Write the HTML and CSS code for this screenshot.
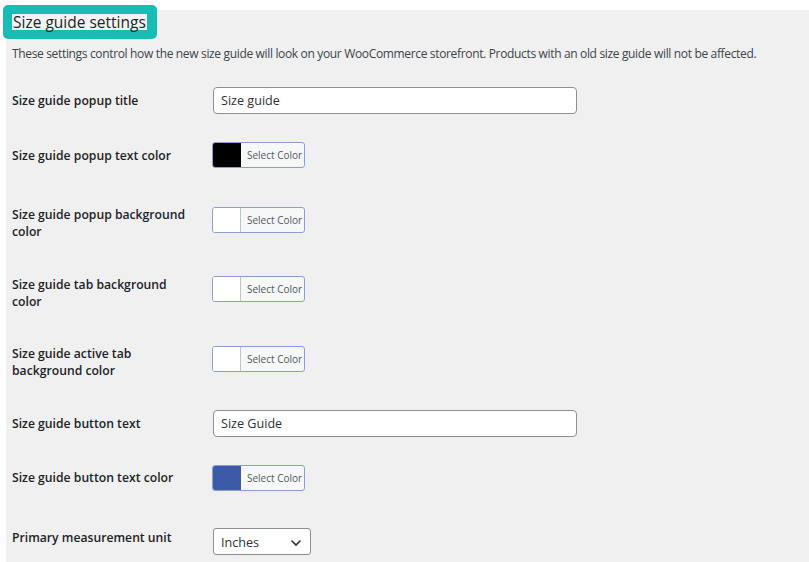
FILE: index.html
```html
<!DOCTYPE html>
<html lang="en">
<head>
<meta charset="utf-8">
<title>Size guide settings</title>
<link rel="stylesheet" href="styles.css">
</head>
<body>
<div class="page">
  <section class="panel">
    <h2 class="title"><span class="title-text">Size guide settings</span></h2>
    <p class="desc">These settings control how the new size guide will look on your WooCommerce storefront. Products with an old size guide will not be affected.</p>

    <div class="row row-input">
      <div class="label">Size guide popup title</div>
      <div class="field"><div class="text-input">Size guide</div></div>
    </div>

    <div class="row row-color1">
      <div class="label">Size guide popup text color</div>
      <div class="field"><div class="color-btn"><span class="swatch swatch-black"></span><span class="color-text">Select Color</span></div></div>
    </div>

    <div class="row row-color2">
      <div class="label">Size guide popup background color</div>
      <div class="field"><div class="color-btn"><span class="swatch swatch-white"></span><span class="color-text">Select Color</span></div></div>
    </div>

    <div class="row row-color2b">
      <div class="label">Size guide tab background color</div>
      <div class="field"><div class="color-btn"><span class="swatch swatch-white"></span><span class="color-text">Select Color</span></div></div>
    </div>

    <div class="row row-color2">
      <div class="label">Size guide active tab background color</div>
      <div class="field"><div class="color-btn"><span class="swatch swatch-white"></span><span class="color-text">Select Color</span></div></div>
    </div>

    <div class="row row-input2">
      <div class="label">Size guide button text</div>
      <div class="field"><div class="text-input">Size Guide</div></div>
    </div>

    <div class="row row-color1b">
      <div class="label">Size guide button text color</div>
      <div class="field"><div class="color-btn"><span class="swatch swatch-blue"></span><span class="color-text">Select Color</span></div></div>
    </div>

    <div class="row row-select">
      <div class="label">Primary measurement unit</div>
      <div class="field">
        <div class="select"><span class="select-text">Inches</span>
          <svg class="chev" width="12" height="8" viewBox="0 0 12 8"><path d="M1.5 1.5 L6 6 L10.5 1.5" fill="none" stroke="#2c3338" stroke-width="1.6"/></svg>
        </div>
      </div>
    </div>
  </section>
</div>
</body>
</html>
```

FILE: styles.css
```css
html, body {
  margin: 0;
  padding: 0;
  background: #ffffff;
  height: 100%;
  overflow: hidden;
}
.page {
  padding: 10px 0 0 6px;
  height: 100%;
  box-sizing: border-box;
}
.panel {
  background: #f0f0f0;
  height: 100%;
  padding: 0 0 0 6px;
  font-family: "Open Sans", "Noto Sans", sans-serif;
  color: #1d2327;
  box-sizing: border-box;
}
.title {
  margin: -5px 0 0 -9px;
  display: inline-block;
  background: #17bcb4;
  border-radius: 5px;
  padding: 9px 10px 9px 9px;
  font-size: 15.5px;
  font-weight: 400;
  line-height: 16px;
}
.title-text {
  display: inline-block;
  background: #f3f3f3;
  color: #1d2327;
  height: 16px;
  line-height: 16px;
  padding: 0 1px;
}
.desc {
  margin: 6px 0 0 0;
  font-size: 12px;
  letter-spacing: -0.34px;
  line-height: 17px;
  color: #3c434a;
}
.row {
  display: grid;
  grid-template-columns: 201px 1fr;
  align-items: start;
  box-sizing: border-box;
}
.label {
  padding-top: 10px;
  font-size: 12.2px;
  font-weight: 600;
  line-height: 17px;
  width: 180px;
}
.row-input { margin-top: 20px; height: 55px; }
.row-color1 { height: 59px; }
.row-color2 { height: 70px; }
.row-color2b { height: 69px; }
.row-input2 { height: 54px; }
.row-color1b { height: 60px; }
.row-select { height: 60px; }

.row-input .field, .row-input2 .field { margin-top: 5px; }
.row-color1 .field { margin-top: 5px; margin-left: -1px; }
.row-color1b .field { margin-top: 6px; margin-left: -1px; }
.row-color2 .field { margin-top: 11px; margin-left: -1px; }
.row-color2b .field { margin-top: 10px; margin-left: -1px; }
.row-select .field { margin-top: 9px; }

.text-input {
  width: 364px;
  height: 27px;
  box-sizing: border-box;
  border: 1px solid #8c8f94;
  border-radius: 4px;
  background: #ffffff;
  padding: 0 7px;
  font-size: 12.6px;
  line-height: 25px;
  color: #2c3338;
}
.color-btn {
  display: flex;
  width: 93px;
  height: 26px;
  box-sizing: border-box;
  border: 1px solid #8d9dd2;
  border-radius: 3px;
  overflow: hidden;
  background: #f6f7f7;
}
.swatch {
  width: 27px;
  flex: none;
  border-right: 1px solid #c3c4c7;
}
.swatch-black { background: #000000; border-right-color: #000; }
.swatch-white { background: #ffffff; }
.swatch-blue { background: #3c5aa6; border-right-color: #3c5aa6; }
.color-text {
  flex: 1;
  font-size: 10px;
  line-height: 24px;
  color: #50575e;
  padding-left: 6px;
  white-space: nowrap;
}
.select {
  display: flex;
  align-items: center;
  justify-content: space-between;
  width: 98px;
  height: 27px;
  box-sizing: border-box;
  border: 1px solid #8c8f94;
  border-radius: 3px;
  background: #ffffff;
  padding: 2px 8px 0 7px;
  font-size: 12.6px;
  color: #2c3338;
}
.chev { margin-right: 0; }
```
